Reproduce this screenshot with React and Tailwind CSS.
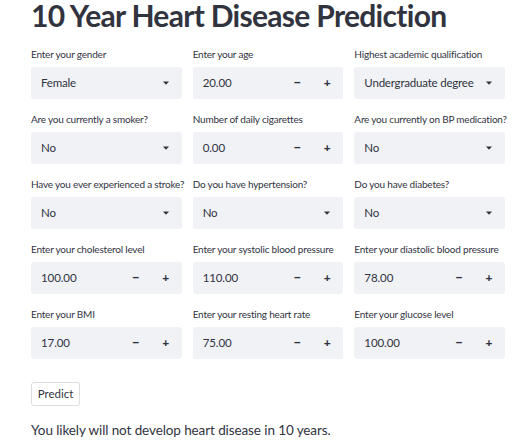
import React from 'react';

const fields = [
  { label: 'Enter your gender', type: 'select', value: 'Female' },
  { label: 'Enter your age', type: 'number', value: '20.00' },
  { label: 'Highest academic qualification', type: 'select', value: 'Undergraduate degree' },
  { label: 'Are you currently a smoker?', type: 'select', value: 'No' },
  { label: 'Number of daily cigarettes', type: 'number', value: '0.00' },
  { label: 'Are you currently on BP medication?', type: 'select', value: 'No' },
  { label: 'Have you ever experienced a stroke?', type: 'select', value: 'No' },
  { label: 'Do you have hypertension?', type: 'select', value: 'No' },
  { label: 'Do you have diabetes?', type: 'select', value: 'No' },
  { label: 'Enter your cholesterol level', type: 'number', value: '100.00' },
  { label: 'Enter your systolic blood pressure', type: 'number', value: '110.00' },
  { label: 'Enter your diastolic blood pressure', type: 'number', value: '78.00' },
  { label: 'Enter your BMI', type: 'number', value: '17.00' },
  { label: 'Enter your resting heart rate', type: 'number', value: '75.00' },
  { label: 'Enter your glucose level', type: 'number', value: '100.00' },
];

const Caret = () => (
  <svg width="6" height="4" viewBox="0 0 6 4" className="fill-[#31333f]">
    <path d="M0 0.5h6L3 3.8z" />
  </svg>
);

const Field = ({ field }) => (
  <div>
    <div className="h-[14px] leading-[14px] text-[10px] tracking-[-0.2px] text-[#31333f] mb-[6px] whitespace-nowrap">{field.label}</div>
    {field.type === 'select' ? (
      <div className="h-[32px] bg-[#f0f2f6] rounded-[3px] flex items-center pl-[10px] pr-[13px] justify-between">
        <span className="text-[11.5px] tracking-[-0.2px] text-[#31333f] whitespace-nowrap">{field.value}</span>
        <Caret />
      </div>
    ) : (
      <div className="h-[32px] bg-[#f0f2f6] rounded-[3px] flex items-center pl-[10px]">
        <span className="text-[11.5px] tracking-[-0.1px] text-[#31333f] flex-1">{field.value}</span>
        <span className="w-[30px] text-center text-[13px] font-black text-[#31333f]">−</span>
        <span className="w-[30px] text-center text-[12px] font-black text-[#31333f] mr-[1px]">+</span>
      </div>
    )}
  </div>
);

export default function App() {
  return (
    <div className="w-[530px] h-[442px] bg-white overflow-hidden px-[31px] text-[#31333f]" style={{ fontFamily: 'Lato, "Noto Sans", sans-serif' }}>
      <h1 className="text-[30px] leading-[30px] font-bold tracking-[-0.7px] mb-[17px] whitespace-nowrap">10 Year Heart Disease Prediction</h1>
      <div className="grid grid-cols-3 gap-x-[11px] gap-y-[13px] w-[474px]">
        {fields.map((f, i) => (
          <Field key={i} field={f} />
        ))}
      </div>
      <button className="mt-[23px] h-[24px] w-[49px] border border-[#dcdde1] rounded-[3px] text-[11.5px] text-[#31333f] bg-white">Predict</button>
      <p className="mt-[14px] text-[13.5px] leading-[20px] tracking-[-0.1px]">You likely will not develop heart disease in 10 years.</p>
    </div>
  );
}
